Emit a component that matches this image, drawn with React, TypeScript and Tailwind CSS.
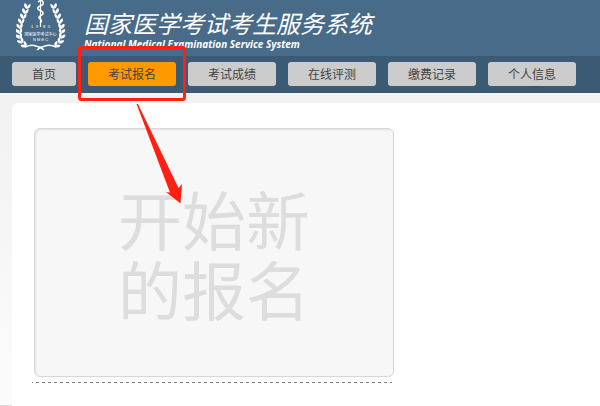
import React from "react";

const navItems = [
  { label: "首页", width: "w-16", active: false },
  { label: "考试报名", width: "w-[88px]", active: true },
  { label: "考试成绩", width: "w-[88px]", active: false },
  { label: "在线评测", width: "w-[88px]", active: false },
  { label: "缴费记录", width: "w-[88px]", active: false },
  { label: "个人信息", width: "w-[88px]", active: false },
];

// Leaf positions along the left branch of the wreath: x, y and lean in degrees.
const leaves = [
  [11, 6, 12],
  [9, 11, 12],
  [7, 16, 8],
  [5, 21, 3],
  [3.5, 26, -4],
  [3, 31, -12],
  [3, 36, -20],
  [4.5, 41, -34],
  [8, 45, -50],
];

function Branch() {
  return (
    <g>
      {leaves.map(([x, y, lean]) => (
        <g key={y} transform={`translate(${x} ${y}) rotate(${lean})`}>
          <path d="M0 3 C-3.5 1 -3.5 -1 -2.5 -2.5 C0 -1.5 1 0 0 3Z" />
          <path d="M0 3 C0 0 1 -2 3 -3 C4 0 3 2 0 3Z" />
        </g>
      ))}
      <path d="M9 47 Q15 44 20 46 Q25 47 28 50" fill="none" stroke="white" strokeWidth="1.5" />
    </g>
  );
}

function Emblem() {
  return (
    <svg viewBox="0 0 50 52" className="h-[52px] w-[50px] shrink-0" fill="white" aria-label="NMEC">
      <Branch />
      <g transform="translate(49 0) scale(-1 1)">
        <Branch />
      </g>
      <path d="M24.5 0V27" stroke="white" strokeWidth="1.2" />
      <path
        d="M22 2 Q26 -1 27 2 Q28 5 24 6 Q20 8 23 10 Q29 12 26 15 Q21 17 24 19 Q27 21 24 23"
        fill="none"
        stroke="white"
        strokeWidth="1.5"
      />
      <g textAnchor="middle" className="font-['Liberation_Sans','Noto_Sans_CJK_SC',sans-serif]">
        <text x="16" y="28" fontSize="4">1</text>
        <text x="21" y="28" fontSize="4">9</text>
        <text x="28" y="28" fontSize="4">8</text>
        <text x="33" y="28" fontSize="4">5</text>
        <text x="24.5" y="36" fontSize="4">国家医学考试中心</text>
        <text x="24.5" y="41" fontSize="4">N M E C</text>
      </g>
    </svg>
  );
}

function Annotation() {
  return (
    <svg
      viewBox="0 0 108 158"
      className="pointer-events-none absolute left-[78px] top-[46px] h-[158px] w-[108px]"
      aria-hidden="true"
    >
      <rect x="1.5" y="1.5" width="105" height="52" rx="2" fill="none" stroke="#ff2014" strokeWidth="3" />
      <path d="M58.5 58 L60 58 L100.5 142 L104 138 L102.5 157.5 L88 146 L92 146.5Z" fill="#ff2014" />
    </svg>
  );
}

export default function App() {
  return (
    <div className="relative flex min-h-screen flex-col bg-linear-to-b from-[#eeeeee] to-[#fcfcfc] font-['Liberation_Sans','Noto_Sans_CJK_SC',sans-serif]">
      <header className="flex h-14 items-start gap-[18px] bg-[#476b88] pl-4 text-white">
        <Emblem />
        <div className="flex flex-col whitespace-nowrap pt-[13px] italic">
          <h1 className="text-2xl leading-6">国家医学考试考生服务系统</h1>
          <p className="font-['Open_Sans',sans-serif] text-[10px] font-bold leading-[14px]">
            National Medical Examination Service System
          </p>
        </div>
      </header>
      <nav className="flex gap-3 bg-[#3b5a73] px-3 pb-[7px] pt-1.5">
        {navItems.map((item) => (
          <button
            key={item.label}
            type="button"
            className={`h-6 shrink-0 rounded-[3px] pt-0.5 text-xs text-[#444444] ${item.width} ${
              item.active ? "bg-[#ff9900]" : "bg-[#cccccc]"
            }`}
          >
            {item.label}
          </button>
        ))}
      </nav>
      <div className="flex grow flex-col border-b border-[#dddddd] pl-3 pt-2.5">
        <main className="-mb-px grow rounded-tl-md bg-white pl-5 pt-[25px]">
          <div className="w-[362px] pl-0.5">
            <button
              type="button"
              className="flex h-[249px] w-full items-center justify-center rounded-md border border-[#d8d8d8] bg-[#f7f7f7] pt-2.5 text-[64px] leading-[70px] text-[#dddddd] shadow-[inset_1px_1px_2px_#e2e2e2]"
            >
              <span className="w-48">开始新的报名</span>
            </button>
          </div>
          <hr className="mt-[5px] h-px w-[360px] border-0 bg-[repeating-linear-gradient(90deg,#808080_0_1px,transparent_1px_4px,#808080_4px_6px)]" />
        </main>
      </div>
      <Annotation />
    </div>
  );
}
